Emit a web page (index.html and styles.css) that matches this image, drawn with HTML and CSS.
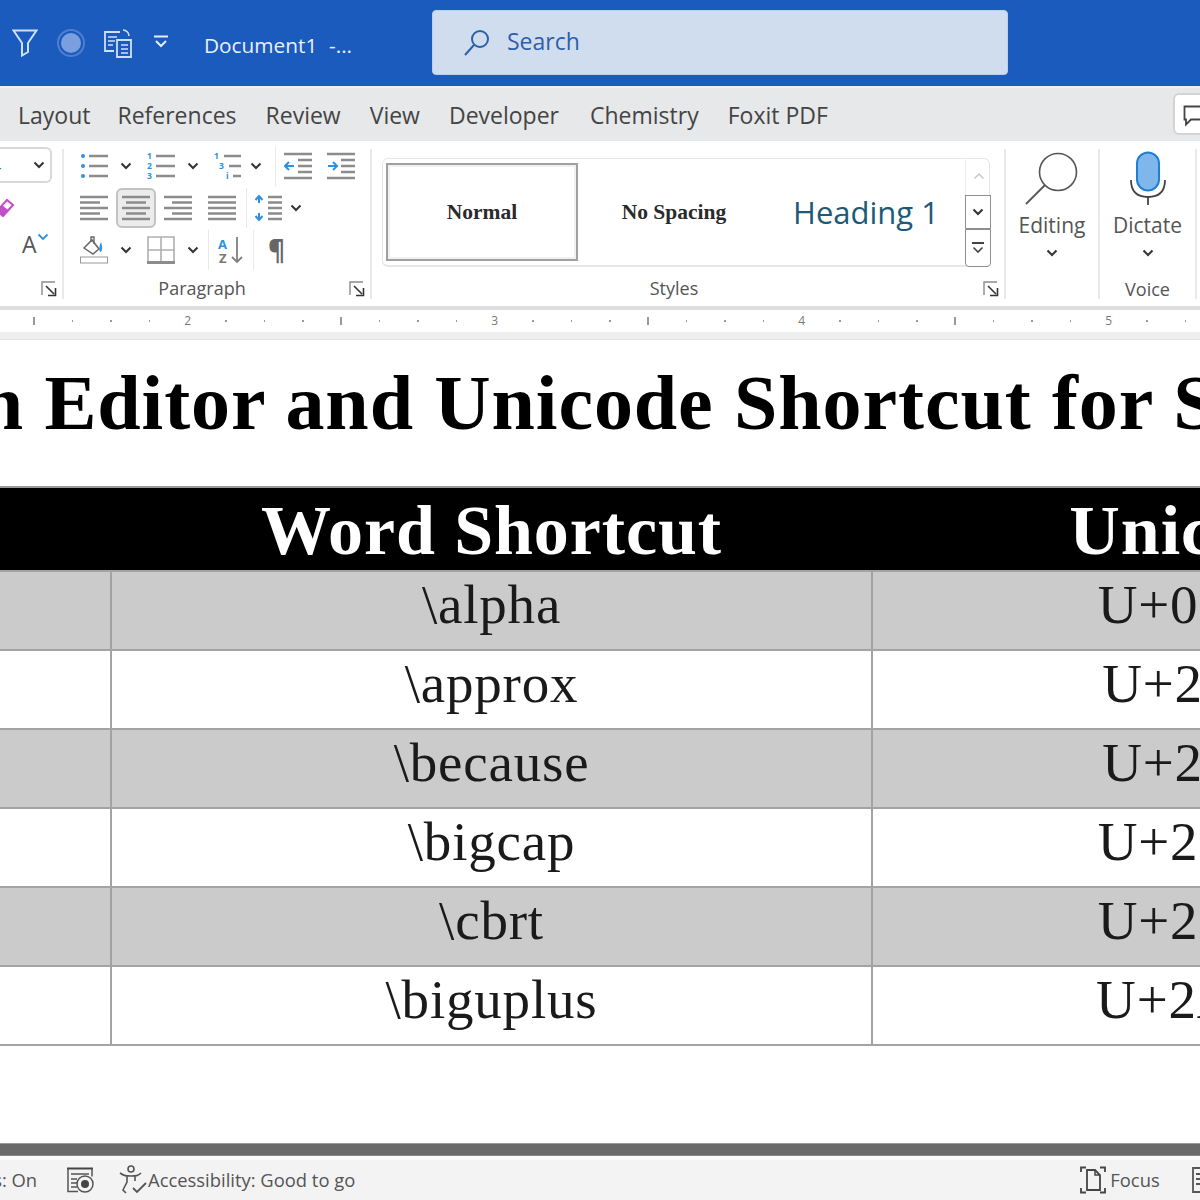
FILE: index.html
```html
<!DOCTYPE html>
<html lang="en">
<head>
<meta charset="utf-8">
<title>Document1 - Word</title>
<link rel="stylesheet" href="styles.css">
</head>
<body>
<svg class="sprite" width="0" height="0" aria-hidden="true">
  <symbol id="chev" viewBox="0 0 12 8"><path d="M1.5 1.5 6 6l4.5-4.5" fill="none" stroke="#333" stroke-width="2"/></symbol>
  <symbol id="launch" viewBox="0 0 16 16"><path d="M14 1H1v13" fill="none" stroke="#8a8a8a" stroke-width="1.4"/><path d="M5 5l8 8M7 14.5h7.5V7" fill="none" stroke="#333" stroke-width="1.6"/></symbol>
  <symbol id="bullets" viewBox="0 0 28 28"><g fill="#2f8fe0"><circle cx="3" cy="4" r="2"/><circle cx="3" cy="14" r="2"/><circle cx="3" cy="24" r="2"/></g><path d="M9 4h19M9 14h19M9 24h19" stroke="#8c8c8c" stroke-width="2.400"/></symbol>
  <symbol id="outdent" viewBox="0 0 28 28"><path d="M0 2h28M14 8h14M14 14h14M14 20h14M0 26h28" stroke="#8c8c8c" stroke-width="2.400"/><path d="M1 14h9M5 10l-4 4 4 4" fill="none" stroke="#2f8fe0" stroke-width="2"/></symbol>
  <symbol id="indent" viewBox="0 0 28 28"><path d="M0 2h28M14 8h14M14 14h14M14 20h14M0 26h28" stroke="#8c8c8c" stroke-width="2.400"/><path d="M1 14h9M6 10l4 4-4 4" fill="none" stroke="#2f8fe0" stroke-width="2"/></symbol>
  <symbol id="aleft" viewBox="0 0 28 28"><path d="M0 3h28M0 8.500h20M0 14h28M0 19.500h20M0 25h28" stroke="#8c8c8c" stroke-width="2.400"/></symbol>
  <symbol id="acenter" viewBox="0 0 28 28"><path d="M0 3h28M4 8.500h20M0 14h28M4 19.500h20M0 25h28" stroke="#8c8c8c" stroke-width="2.400"/></symbol>
  <symbol id="aright" viewBox="0 0 28 28"><path d="M0 3h28M8 8.500h20M0 14h28M8 19.500h20M0 25h28" stroke="#8c8c8c" stroke-width="2.400"/></symbol>
  <symbol id="ajust" viewBox="0 0 28 28"><path d="M0 3h28M0 8.500h28M0 14h28M0 19.500h28M0 25h28" stroke="#8c8c8c" stroke-width="2.400"/></symbol>
  <symbol id="spacing" viewBox="0 0 28 28"><path d="M14 3h14M14 8.500h14M14 14h14M14 19.500h14M14 25h14" stroke="#8c8c8c" stroke-width="2.400"/><path d="M5 9V3M1.500 6 5 2l3.500 4M5 19v6M1.500 22 5 26l3.500-4" fill="none" stroke="#2f8fe0" stroke-width="2"/></symbol>
  <symbol id="fill" viewBox="0 0 28 28"><path d="M4 12l8-8 7 9-6 5z" fill="#fff" stroke="#666" stroke-width="1.500"/><path d="M11 6V1h3v7" fill="none" stroke="#666" stroke-width="1.400"/><path d="M21 6c-2 4-2 8-1 10 2 0 3-4 1-10z" fill="#2f8fe0"/><rect x="0.500" y="21" width="27" height="6" fill="#fff" stroke="#999"/></symbol>
  <symbol id="borders" viewBox="0 0 28 28"><path d="M1 1h26v26H1zM14 1v26M1 14h26" fill="none" stroke="#b0b0b0" stroke-width="1.600"/><path d="M0 26.500h28" stroke="#8c8c8c" stroke-width="3"/></symbol>
</svg>

<header class="titlebar">
  <svg class="qat funnel" viewBox="0 0 26 28"><path d="M1.500 1.500h23L16 14v9l-6 3.500V14z" fill="none" stroke="#cfe0f7" stroke-width="2"/></svg>
  <svg class="qat record" viewBox="0 0 28 28"><circle cx="14" cy="14" r="13" fill="none" stroke="#4f7fcb" stroke-width="2"/><circle cx="14" cy="14" r="10" fill="#7b9fde"/></svg>
  <svg class="qat compare" viewBox="0 0 30 30"><path d="M17 4H2v19h9" fill="none" stroke="#cfe0f7" stroke-width="1.800"/><path d="M5 9h9M5 13h7M5 17h5" stroke="#cfe0f7" stroke-width="1.500"/><path d="M14 12h14v17H14z" fill="#1a5bbd" stroke="#cfe0f7" stroke-width="1.800"/><path d="M18 17h7M18 21h7M18 25h7" stroke="#cfe0f7" stroke-width="1.500"/><path d="M20 2a6 6 0 0 1 6 6" fill="none" stroke="#cfe0f7" stroke-width="1.600"/></svg>
  <svg class="qat more" viewBox="0 0 16 14"><path d="M1 1.500h14" stroke="#e4edfa" stroke-width="2"/><path d="M3 6l5 5 5-5" fill="none" stroke="#e4edfa" stroke-width="2"/></svg>
  <span class="doc-name">Document1</span>
  <span class="doc-rest">-...</span>
  <div class="search">
    <svg class="search-icon" viewBox="0 0 28 28"><circle cx="17" cy="10" r="8" fill="none" stroke="#2d5fab" stroke-width="2"/><path d="M11 16 2 26" stroke="#2d5fab" stroke-width="2"/></svg>
    <span>Search</span>
  </div>
</header>

<nav class="tabs">
  <span class="tab tab-layout">Layout</span>
  <span class="tab">References</span>
  <span class="tab">Review</span>
  <span class="tab">View</span>
  <span class="tab tab-dev">Developer</span>
  <span class="tab">Chemistry</span>
  <span class="tab">Foxit PDF</span>
  <div class="comment-btn">
    <svg viewBox="0 0 24 22" width="24" height="22"><path d="M1.500 1.500h21v13H8l-5 5v-5H1.500z" fill="none" stroke="#444" stroke-width="1.800"/></svg>
  </div>
</nav>

<section class="ribbon">
  <div class="group group-font">
    <div class="combo"><span class="combo-val">4</span><svg class="chev"><use href="#chev"/></svg></div>
    <svg class="eraser" viewBox="0 0 22 22"><path d="M2 14 12 3l6 5L8 19z" fill="#fff" stroke="#c04fc8" stroke-width="2"/><path d="M2 14l6 5 5-6-6-5z" fill="#c04fc8"/></svg>
    <div class="case"><span>A</span><svg class="case-chev" viewBox="0 0 12 8"><path d="M1.500 1.500 6 6l4.500-4.500" fill="none" stroke="#2f8fe0" stroke-width="1.800"/></svg></div>
    <svg class="launch"><use href="#launch"/></svg>
  </div>

  <div class="group group-para">
    <div class="row">
      <div class="split"><svg class="ico"><use href="#bullets"/></svg><svg class="chev"><use href="#chev"/></svg></div>
      <div class="split"><svg class="ico" viewBox="0 0 28 28"><g class="mini-num"><text x="0" y="7">1</text><text x="0" y="17">2</text><text x="0" y="27">3</text></g><path d="M9 4h19M9 14h19M9 24h19" stroke="#8c8c8c" stroke-width="2.400"/></svg><svg class="chev"><use href="#chev"/></svg></div>
      <div class="split split-multi"><svg class="ico" viewBox="0 0 28 28"><g class="mini-num"><text x="0" y="7">1</text><text x="5" y="17">3</text><text x="12" y="27">i</text></g><path d="M10 4h17M15 14h12M19 24h8" stroke="#8c8c8c" stroke-width="2.400"/></svg><svg class="chev"><use href="#chev"/></svg></div>
      <i class="vsep"></i>
      <svg class="ico ico-wide"><use href="#outdent"/></svg>
      <svg class="ico ico-wide"><use href="#indent"/></svg>
    </div>
    <div class="row">
      <svg class="ico"><use href="#aleft"/></svg>
      <div class="selected"><svg class="ico"><use href="#acenter"/></svg></div>
      <svg class="ico"><use href="#aright"/></svg>
      <svg class="ico ico-just"><use href="#ajust"/></svg>
      <i class="vsep vsep-align"></i>
      <svg class="ico"><use href="#spacing"/></svg>
      <svg class="chev chev-spacing"><use href="#chev"/></svg>
    </div>
    <div class="row">
      <div class="split"><svg class="ico"><use href="#fill"/></svg><svg class="chev"><use href="#chev"/></svg></div>
      <div class="split split-borders"><svg class="ico"><use href="#borders"/></svg><svg class="chev"><use href="#chev"/></svg></div>
      <i class="vsep vsep-sort"></i>
      <svg class="ico ico-sort" viewBox="0 0 26 28"><text class="sort-a" x="0" y="13">A</text><text class="sort-z" x="1" y="27">Z</text><path d="M19 1v25M14 21l5 5 5-5" fill="none" stroke="#808080" stroke-width="1.800"/></svg>
      <i class="vsep vsep-pil"></i>
      <span class="pilcrow">¶</span>
    </div>
    <div class="group-foot"><span>Paragraph</span><svg class="launch"><use href="#launch"/></svg></div>
  </div>

  <div class="group group-styles">
    <div class="gallery">
      <div class="style style-normal">Normal</div>
      <div class="style style-nospace">No Spacing</div>
      <div class="style style-h1">Heading 1</div>
      <div class="scroller">
        <span class="scr scr-up"><svg viewBox="0 0 12 8" width="12" height="8"><path d="M1.500 6.500 6 2l4.500 4.500" fill="none" stroke="#c8c8c8" stroke-width="1.500"/></svg></span>
        <span class="scr scr-down"><svg class="chev"><use href="#chev"/></svg></span>
        <span class="scr scr-more"><svg viewBox="0 0 14 14" width="14" height="14"><path d="M1 2h12" stroke="#444" stroke-width="2"/><path d="M2.500 6.500 7 11l4.500-4.500" fill="none" stroke="#444" stroke-width="1.600"/></svg></span>
      </div>
    </div>
    <div class="group-foot"><span>Styles</span><svg class="launch"><use href="#launch"/></svg></div>
  </div>

  <div class="group group-big group-editing">
    <svg class="big-ico" viewBox="0 0 54 54"><circle cx="33" cy="21" r="18.500" fill="#fff" stroke="#555" stroke-width="1.600"/><path d="M20 34 1 53" stroke="#555" stroke-width="1.800"/></svg>
    <span class="big-label">Editing</span>
    <svg class="chev"><use href="#chev"/></svg>
  </div>

  <div class="group group-big group-voice">
    <svg class="big-ico" viewBox="0 0 54 54"><rect x="16" y="1.500" width="22" height="38" rx="11" fill="#7fb6ec" stroke="#1f7fd6" stroke-width="2"/><path d="M10 29c0 12 7 17 17 17s17-5 17-17" fill="none" stroke="#444" stroke-width="1.800"/><path d="M27 46v8" stroke="#444" stroke-width="1.800"/></svg>
    <span class="big-label">Dictate</span>
    <svg class="chev"><use href="#chev"/></svg>
    <span class="voice-label">Voice</span>
  </div>
</section>

<div class="ruler">
  <span class="tk"><b class="tall"></b></span><span class="tk"><b></b></span><span class="tk"><b></b></span><span class="tk"><b></b></span><span class="tk">2</span><span class="tk"><b></b></span><span class="tk"><b></b></span><span class="tk"><b></b></span>
  <span class="tk"><b class="tall"></b></span><span class="tk"><b></b></span><span class="tk"><b></b></span><span class="tk"><b></b></span><span class="tk">3</span><span class="tk"><b></b></span><span class="tk"><b></b></span><span class="tk"><b></b></span>
  <span class="tk"><b class="tall"></b></span><span class="tk"><b></b></span><span class="tk"><b></b></span><span class="tk"><b></b></span><span class="tk">4</span><span class="tk"><b></b></span><span class="tk"><b></b></span><span class="tk"><b></b></span>
  <span class="tk"><b class="tall"></b></span><span class="tk"><b></b></span><span class="tk"><b></b></span><span class="tk"><b></b></span><span class="tk">5</span><span class="tk"><b></b></span><span class="tk"><b></b></span><span class="tk"><b></b></span>
</div>

<main class="doc">
  <h1 class="doc-title">Equation Editor and Unicode Shortcut for Symbols</h1>
  <table class="sheet">
    <colgroup><col class="c1"><col class="c2"><col class="c3"></colgroup>
    <thead><tr><th></th><th>Word Shortcut</th><th>Unicode</th></tr></thead>
    <tbody>
      <tr><td></td><td>\alpha</td><td>U+03B1</td></tr>
      <tr><td></td><td>\approx</td><td>U+2248</td></tr>
      <tr><td></td><td>\because</td><td>U+2235</td></tr>
      <tr><td></td><td>\bigcap</td><td>U+22C2</td></tr>
      <tr><td></td><td>\cbrt</td><td>U+221B</td></tr>
      <tr><td></td><td>\biguplus</td><td>U+2A04</td></tr>
    </tbody>
  </table>
</main>

<div class="scrollbar"></div>

<footer class="status">
  <span class="st-pred">Predictions: On</span>
  <svg class="st-macro" viewBox="0 0 28 26"><path d="M1 1.500h26" stroke="#444" stroke-width="2"/><path d="M2 1.500v23h10M26 1.500v8" fill="none" stroke="#555" stroke-width="1.500"/><path d="M5 7h18M5 12h6M5 16h6M5 20h6" stroke="#555" stroke-width="1.500"/><circle cx="19" cy="17" r="8" fill="#f3f3f3" stroke="#555" stroke-width="1.500"/><circle cx="19" cy="17" r="4" fill="#444"/></svg>
  <svg class="st-acc" viewBox="0 0 30 30"><circle cx="13" cy="4" r="3" fill="none" stroke="#555" stroke-width="1.600"/><path d="M2 8c4 3 6 3 11 3s7 0 10-3M9 11v6l-4 8 3 3M17 11v5" fill="none" stroke="#555" stroke-width="1.600"/><path d="M15 23l4 4 9-9" fill="none" stroke="#555" stroke-width="1.800"/></svg>
  <span class="st-text">Accessibility: Good to go</span>
  <svg class="st-focus" viewBox="0 0 26 28"><path d="M1 6V1.500h5M20 1.500h5V6M1 22v4.500h5M20 26.500h5V22" fill="none" stroke="#444" stroke-width="1.800"/><path d="M7 4h8l5 5v15H7z" fill="none" stroke="#444" stroke-width="1.800"/><path d="M15 4v5h5" fill="none" stroke="#444" stroke-width="1.500"/></svg>
  <span class="st-text">Focus</span>
  <svg class="st-view" viewBox="0 0 14 26"><path d="M1 1h14v24H1zM4 7h10M4 12h10M4 17h10" fill="none" stroke="#555" stroke-width="1.800"/></svg>
</footer>
</body>
</html>
```

FILE: styles.css
```css
* { box-sizing: border-box; }

html, body {
  margin: 0;
  width: 1200px;
  height: 1200px;
  overflow: hidden;
  background: #fff;
  font-family: "Open Sans", "Noto Sans", sans-serif;
  color: #444;
}

body { display: flex; flex-direction: column; }

.sprite { position: absolute; }

/* Title bar */
.titlebar {
  flex: none;
  height: 86px;
  background: #1a5bbd;
  display: flex;
  align-items: center;
  padding-left: 12px;
  color: #e8f0fb;
}
.qat { flex: none; }
.funnel { width: 26px; height: 28px; margin-top: 0; }
.record { width: 28px; height: 28px; margin-left: 19px; }
.compare { width: 30px; height: 30px; margin-left: 18px; }
.more { width: 16px; height: 14px; margin-left: 20px; margin-top: -2px; }
.doc-name { font-size: 20.800px; margin-left: 35px; margin-top: 4px; width: 112px; white-space: nowrap; }
.doc-rest { font-size: 20.800px; margin-left: 13px; margin-top: 4px; width: 103px; }
.search {
  width: 576px;
  height: 65px;
  margin-top: -1px;
  background: #d0ddef;
  border: 1px solid #bcd0ec;
  border-radius: 4px;
  display: flex;
  align-items: center;
  padding-left: 30px;
  font-size: 23px;
  color: #2d5fab;
}
.search-icon { width: 28px; height: 28px; margin-right: 16px; }
.search span { margin-top: -4px; }

/* Tabs */
.tabs {
  flex: none;
  height: 55px;
  background: #e6e8ea;
  border-top: 2px solid #eef0f1;
  display: flex;
  align-items: center;
  gap: 29px;
  padding-left: 18px;
  font-size: 23px;
  color: #444;
  white-space: nowrap;
}
.tab-layout { margin-right: -2px; }
.tab-dev { margin-right: 2px; }
.comment-btn {
  position: absolute;
  left: 1173px;
  top: 93px;
  width: 60px;
  height: 42px;
  background: #fff;
  border: 2px solid #d4d4d4;
  border-radius: 6px;
  padding: 7px 8px;
}

/* Ribbon */
.ribbon {
  flex: none;
  height: 165px;
  background: #fff;
  display: flex;
  padding: 8px 0;
  overflow: hidden;
}
.group {
  flex: none;
  position: relative;
  display: flex;
  flex-direction: column;
  border-right: 2px solid #e9e9e9;
  height: 150px;
}
.group-foot {
  margin-top: auto;
  height: 20px;
  display: flex;
  justify-content: center;
  align-items: center;
  font-size: 18px;
  color: #555;
}
.group-foot span { margin-top: -2px; }
.launch { width: 16px; height: 16px; }
.group-foot .launch, .group-font .launch {
  position: absolute;
  right: 5px;
  bottom: 2px;
}
.chev { width: 12px; height: 8px; flex: none; }
.ico { width: 28px; height: 28px; flex: none; }

.mini-num { fill: #2f8fe0; font-size: 8.500px; font-weight: 700; }
.sort-a { fill: #2f8fe0; font-size: 13px; font-weight: 700; }
.sort-z { fill: #777; font-size: 13px; font-weight: 700; }

.group-font { width: 64px; }
.combo {
  width: 52px;
  height: 36px;
  margin-top: -2px;
  border: 2px solid #d8d8d8;
  border-left: 0;
  border-radius: 0 6px 6px 0;
  display: flex;
  align-items: center;
  justify-content: space-between;
  padding-right: 5px;
  font-size: 18px;
  color: #3a6ea8;
}
.combo-val { margin-left: -9px; }
.eraser { width: 22px; height: 22px; margin: 14px 0 0 -5px; }
.case { display: flex; font-size: 23px; color: #555; margin: 10px 0 0 22px; line-height: 30px; }
.case-chev { width: 12px; height: 8px; margin-top: 4px; }

.group-para { width: 308px; padding-left: 16px; gap: 8px; }
.group-para .group-foot { padding-right: 46px; }
.row { height: 34px; display: flex; align-items: center; flex: none; }
.split { width: 67px; display: flex; align-items: center; gap: 12px; flex: none; }
.split-multi { width: 61px; gap: 8px; }
.split-borders { width: 61px; }
.vsep { width: 1px; height: 40px; background: #e9e9e9; flex: none; }
.ico-wide { margin-left: 8px; }
.ico-wide + .ico-wide { margin-left: 15px; }
.selected {
  width: 40px;
  height: 40px;
  margin: 0 8px;
  background: #ececec;
  border: 2px solid #c2c2c2;
  border-radius: 6px;
  display: flex;
  align-items: center;
  justify-content: center;
  flex: none;
}
.ico-just { margin-left: 16px; }
.vsep-align { margin-left: 10px; }
.vsep-align + .ico { margin-left: 7px; }
.chev-spacing { margin-left: 8px; }
.vsep-sort + .ico-sort { margin-left: 9px; }
.ico-sort { width: 26px; }
.vsep-pil { margin-left: 9px; }
.pilcrow { font-size: 26px; font-weight: 700; color: #666; margin-left: 14px; line-height: 34px; }

.group-styles { width: 634px; padding: 9px 0 0 10px; }
.group-styles .group-foot { padding-right: 38px; }
.gallery {
  width: 608px;
  height: 109px;
  border: 1px solid #e6e6e6;
  border-bottom-width: 2px;
  border-radius: 6px;
  display: flex;
  align-items: center;
  padding-left: 3px;
}
.style {
  width: 192px;
  height: 98px;
  flex: none;
  display: flex;
  align-items: center;
  justify-content: center;
  font-family: "Liberation Serif", serif;
  font-weight: 700;
  font-size: 21.500px;
  color: #2a2a2a;
}
.style-normal { border: 2px solid #a0a0a0; outline: 2px solid #f0f0f0; outline-offset: -4px; }
.style-h1 {
  font-family: "Open Sans", sans-serif;
  font-weight: 400;
  font-size: 31px;
  color: #1c5a78;
  white-space: nowrap;
}
.scroller { width: 26px; height: 109px; margin-left: 3px; display: flex; flex-direction: column; }
.scr { flex: none; display: flex; align-items: center; justify-content: center; width: 26px; }
.scr-up { height: 37px; border-left: 1px solid #eee; }
.scr-down, .scr-more { border: 1px solid #8f8f8f; background: #fff; }
.scr-down { height: 34px; }
.scr-more { height: 38px; border-radius: 0 0 4px 4px; }

.group-big { align-items: center; padding-top: 2px; }
.group-editing { width: 94px; }
.group-voice { width: 97px; }
.big-ico { width: 54px; height: 54px; flex: none; }
.big-label { font-size: 21px; color: #555; line-height: 28px; margin-top: 6px; }
.big-ico + .big-label + .chev { margin-top: 10px; }
.voice-label { margin-top: auto; font-size: 18px; color: #555; line-height: 20px; }

/* Ruler */
.ruler {
  flex: none;
  height: 33px;
  background: #fff;
  border-top: 4px solid #dedede;
  border-bottom: 7px solid #efefef;
  display: flex;
  padding-left: 15px;
  font-size: 12px;
  color: #777;
}
.tk {
  flex: none;
  width: 38.375px;
  display: flex;
  align-items: center;
  justify-content: center;
  line-height: 1;
}
.tk b { width: 1.500px; height: 2px; background: #999; display: block; }
.tk b.tall { height: 8px; }

/* Document */
.doc {
  flex: 1;
  min-height: 0;
  border-top: 1px solid #e2e2e2;
  overflow: hidden;
  background: #fff;
  font-family: "Liberation Serif", serif;
  color: #1a1a1a;
}
.doc-title {
  margin: 13px 0 0 -291px;
  font-size: 78px;
  line-height: 100px;
  font-weight: 700;
  letter-spacing: .9px;
  white-space: nowrap;
  color: #000;
}
.sheet {
  margin: 33px 0 0 -4px;
  table-layout: fixed;
  width: 1521px;
  border-collapse: collapse;
}
.c1 { width: 114px; }
.c2 { width: 761px; }
.c3 { width: 646px; }
.sheet th {
  height: 84px;
  padding: 3px 0 0;
  background: #000;
  color: #fff;
  font-size: 70px;
  line-height: 74px;
  font-weight: 700;
  letter-spacing: .9px;
  border-top: 2px solid #9a9a9a;
}
.sheet td {
  height: 79px;
  padding: 0 0 12px;
  text-align: center;
  font-size: 55px;
  line-height: 60px;
  letter-spacing: .8px;
  border: 2px solid #a3a3a3;
}
.sheet tbody tr:nth-child(odd) td { background: #cbcbcb; }

/* Scrollbar + status bar */
.scrollbar {
  flex: none;
  height: 13px;
  background: #6a6a6a;
  border-top: 1px solid #999;
  border-bottom: 1px solid #888;
}
.status {
  flex: none;
  height: 44px;
  border-top: 4px solid #fafafa;
  background: #f3f3f3;
  display: flex;
  align-items: center;
  font-size: 18.400px;
  color: #555;
  white-space: nowrap;
}
.st-pred { margin-left: -94px; width: 160px; flex: none; margin-top: -2px; }
.st-text { margin-top: -2px; }
.st-macro { width: 28px; height: 26px; flex: none; }
.st-acc { width: 30px; height: 30px; flex: none; margin-left: 24px; }
.st-focus { width: 26px; height: 28px; flex: none; margin-left: 725px; margin-right: 4px; }
.st-view { width: 14px; height: 26px; flex: none; margin-left: 32px; }
```
